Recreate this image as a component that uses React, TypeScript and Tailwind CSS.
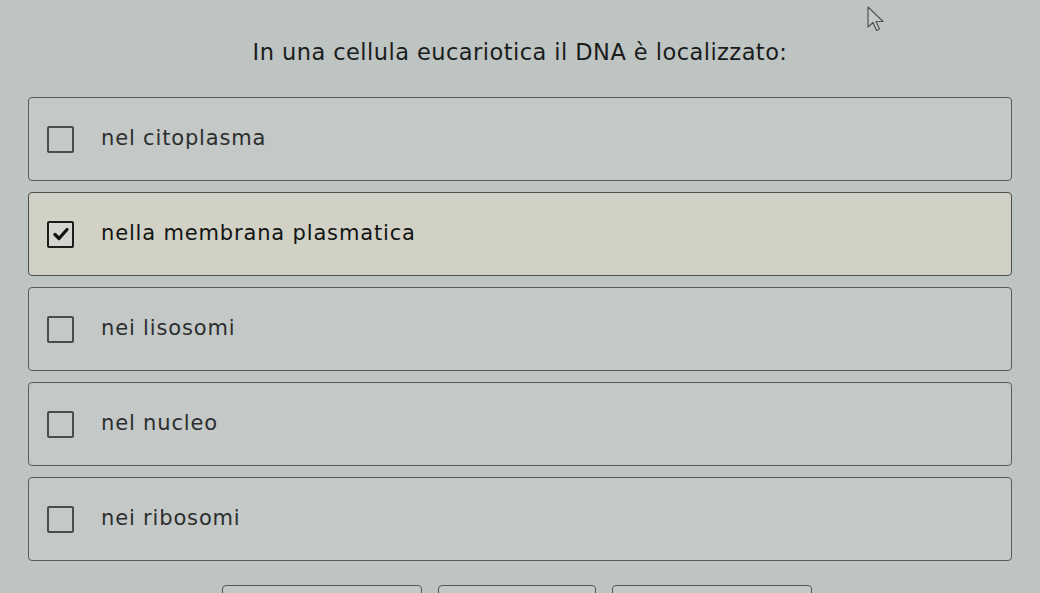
import React from 'react';

const options = [
  { label: 'nel citoplasma', checked: false },
  { label: 'nella membrana plasmatica', checked: true },
  { label: 'nei lisosomi', checked: false },
  { label: 'nel nucleo', checked: false },
  { label: 'nei ribosomi', checked: false },
];

const Checkbox: React.FC<{ checked: boolean }> = ({ checked }) => (
  <div
    className={
      checked
        ? 'w-[27px] h-[27px] border-2 border-[#1c1c1c] rounded-[2px] bg-[#d4d6d0] flex items-center justify-center shrink-0'
        : 'w-[27px] h-[27px] border-2 border-[#4a4c4b] rounded-[2px] shrink-0'
    }
  >
    {checked && (
      <svg width="16" height="14" viewBox="0 0 16 14">
        <path d="M2 7.5 L6 11.5 L14 2.5" fill="none" stroke="#111" strokeWidth="3.2" strokeLinecap="round" strokeLinejoin="round" />
      </svg>
    )}
  </div>
);

const App: React.FC = () => {
  return (
    <div
      className="relative w-[1040px] h-[593px] overflow-hidden bg-[#bec4c2] text-[#2a2c2c]"
      style={{ fontFamily: '"DejaVu Sans", "Noto Sans", sans-serif' }}
    >
      <svg className="absolute left-[866px] top-[6px]" width="22" height="30" viewBox="0 0 22 30">
        <path d="M2 1 L2 21 L7 16.5 L10.5 24.5 L13.5 23 L10 15.5 L17 15.5 Z" fill="#c4cac8" stroke="#555" strokeWidth="1.2" strokeLinejoin="round" />
      </svg>

      <h1 className="pt-[36px] text-center text-[22.5px] tracking-[0.02em] leading-[32px] text-[#1a1c1c]">
        In una cellula eucariotica il DNA è localizzato:
      </h1>

      <div className="mt-[29px] px-[28px] flex flex-col gap-[11px]">
        {options.map((o) => (
          <div
            key={o.label}
            className={
              o.checked
                ? 'h-[84px] flex items-center gap-[27px] pl-[18px] border border-[#4d4f4e] rounded-[4px] bg-[#d1d1c5]'
                : 'h-[84px] flex items-center gap-[27px] pl-[18px] border border-[#5a5c5b] rounded-[4px] bg-[#c4c9c7]'
            }
          >
            <Checkbox checked={o.checked} />
            <span
              className={
                o.checked
                  ? 'text-[21px] tracking-[0.04em] text-[#121414]'
                  : 'text-[21px] tracking-[0.04em] text-[#2c2e2e]'
              }
            >
              {o.label}
            </span>
          </div>
        ))}
      </div>

      <div className="mt-[24px] flex gap-[16px] pl-[222px]">
        <div className="w-[200px] h-[30px] border border-[#555] rounded-[4px] bg-[#c4c9c7]" />
        <div className="w-[158px] h-[30px] border border-[#555] rounded-[4px] bg-[#c4c9c7]" />
        <div className="w-[200px] h-[30px] border border-[#555] rounded-[4px] bg-[#c4c9c7]" />
      </div>
    </div>
  );
};

export default App;
